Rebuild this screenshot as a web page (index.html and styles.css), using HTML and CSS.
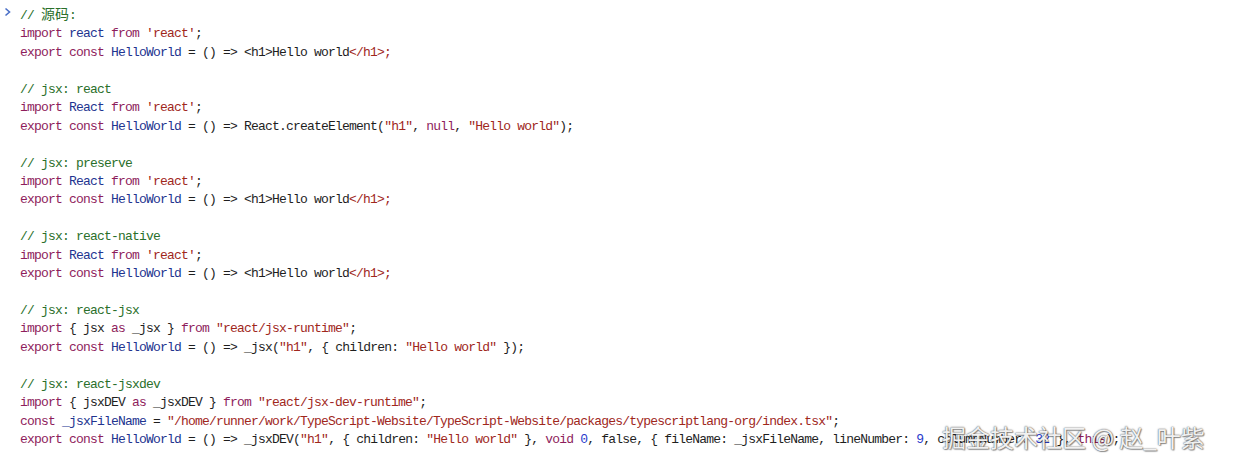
FILE: index.html
```html
<!DOCTYPE html>
<html lang="zh-CN">
<head>
<meta charset="utf-8">
<title>jsx options</title>
<link rel="stylesheet" href="styles.css">
</head>
<body>
<div class="entry">
  <div class="prompt">
    <svg width="8" height="10" viewBox="0 0 8 10"><polyline points="1.5,1.5 5.5,5 1.5,8.5" fill="none" stroke="#4a6fc7" stroke-width="1.6"/></svg>
  </div>
<pre class="code"><span class="c">// <span class="cjk">源码</span>:</span>
<span class="k">import</span> <span class="v">react</span> <span class="k">from</span> <span class="s">'react'</span>;
<span class="k">export</span> <span class="k">const</span> <span class="v">HelloWorld</span> = () =&gt; &lt;h1&gt;Hello world<span class="s">&lt;/h1&gt;;</span>

<span class="c">// jsx: react</span>
<span class="k">import</span> <span class="v">React</span> <span class="k">from</span> <span class="s">'react'</span>;
<span class="k">export</span> <span class="k">const</span> <span class="v">HelloWorld</span> = () =&gt; React.createElement(<span class="s">"h1"</span>, <span class="k">null</span>, <span class="s">"Hello world"</span>);

<span class="c">// jsx: preserve</span>
<span class="k">import</span> <span class="v">React</span> <span class="k">from</span> <span class="s">'react'</span>;
<span class="k">export</span> <span class="k">const</span> <span class="v">HelloWorld</span> = () =&gt; &lt;h1&gt;Hello world<span class="s">&lt;/h1&gt;;</span>

<span class="c">// jsx: react-native</span>
<span class="k">import</span> <span class="v">React</span> <span class="k">from</span> <span class="s">'react'</span>;
<span class="k">export</span> <span class="k">const</span> <span class="v">HelloWorld</span> = () =&gt; &lt;h1&gt;Hello world<span class="s">&lt;/h1&gt;;</span>

<span class="c">// jsx: react-jsx</span>
<span class="k">import</span> { jsx <span class="k">as</span> _jsx } <span class="k">from</span> <span class="s">"react/jsx-runtime"</span>;
<span class="k">export</span> <span class="k">const</span> <span class="v">HelloWorld</span> = () =&gt; _jsx(<span class="s">"h1"</span>, { children: <span class="s">"Hello world"</span> });

<span class="c">// jsx: react-jsxdev</span>
<span class="k">import</span> { jsxDEV <span class="k">as</span> _jsxDEV } <span class="k">from</span> <span class="s">"react/jsx-dev-runtime"</span>;
<span class="k">const</span> <span class="v">_jsxFileName</span> = <span class="s">"/home/runner/work/TypeScript-Website/TypeScript-Website/packages/typescriptlang-org/index.tsx"</span>;
<span class="k">export</span> <span class="k">const</span> <span class="v">HelloWorld</span> = () =&gt; _jsxDEV(<span class="s">"h1"</span>, { children: <span class="s">"Hello world"</span> }, <span class="k">void</span> <span class="n">0</span>, false, { fileName: _jsxFileName, lineNumber: <span class="n">9</span>, columnNumber: <span class="n">32</span> }, <span class="k">this</span>);</pre>
</div>
<div class="watermark">掘金技术社区 @ 赵_叶紫</div>
</body>
</html>
```

FILE: styles.css
```css
html, body {
  margin: 0;
  padding: 0;
  background: #ffffff;
  overflow: hidden;
}

body {
  position: relative;
  width: 1234px;
  height: 468px;
}

.entry {
  display: flex;
  align-items: flex-start;
  padding-top: 4px;
}

.prompt {
  width: 20px;
  flex: none;
  display: flex;
  padding-left: 4px;
  padding-top: 3px;
  box-sizing: border-box;
}

.code {
  margin: 0;
  font-family: "Liberation Mono", monospace;
  font-size: 13px;
  letter-spacing: -0.8px;
  line-height: 18.43px;
  color: #1e1e1e;
  white-space: pre;
}

.cjk {
  font-family: "Noto Sans CJK SC", sans-serif;
  font-size: 14px;
  letter-spacing: 0;
}

.k { color: #8e1d5c; }
.v { color: #22348f; }
.s { color: #a0271c; }
.c { color: #2a6f2a; }
.n { color: #2a3bcc; }

.watermark {
  position: absolute;
  left: 942px;
  top: 421px;
  font-family: "Noto Sans CJK SC", "Noto Sans", sans-serif;
  font-size: 24px;
  line-height: 32px;
  color: rgba(255, 255, 255, 0.92);
  text-shadow: 0 0 1px #666, 0 0 2px rgba(0, 0, 0, 0.5), 1px 1px 1px rgba(0, 0, 0, 0.35);
  white-space: nowrap;
}
```
